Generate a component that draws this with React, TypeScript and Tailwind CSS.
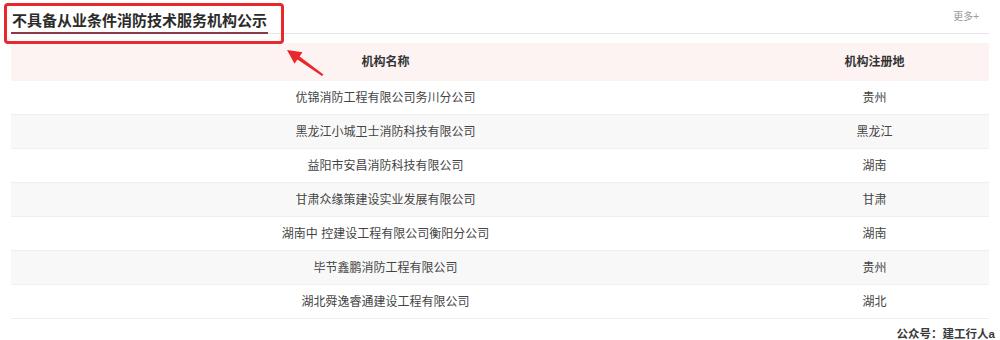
import React from 'react';

const rows = [
  { name: '优锦消防工程有限公司务川分公司', region: '贵州' },
  { name: '黑龙江小城卫士消防科技有限公司', region: '黑龙江' },
  { name: '益阳市安昌消防科技有限公司', region: '湖南' },
  { name: '甘肃众缘策建设实业发展有限公司', region: '甘肃' },
  { name: '湖南中 控建设工程有限公司衡阳分公司', region: '湖南' },
  { name: '毕节鑫鹏消防工程有限公司', region: '贵州' },
  { name: '湖北舜逸睿通建设工程有限公司', region: '湖北' },
];

const App = () => {
  return (
    <div
      className="relative w-[1000px] h-[340px] bg-white overflow-hidden"
      style={{ fontFamily: '"Liberation Sans", "Noto Sans CJK SC", sans-serif' }}
    >
      <div className="pl-[11px] pr-[11px] pt-[7px]">
        {/* title bar */}
        <div className="flex items-end justify-between border-b border-[#e6e6e6] h-[27px]">
          <div className="text-[15px] font-bold text-[#2b2b2b] leading-[22px] border-b-2 border-[#8a3a4c] mb-[-1px] pl-[1px] pr-[1px]">
            不具备从业条件消防技术服务机构公示
          </div>
          <div className="text-[10px] text-[#999] mb-[9px] mr-[10px]">更多+</div>
        </div>

        {/* table */}
        <div className="mt-[9px] w-[978px]">
          <div className="flex h-[38px] items-center bg-[#fdf3f3] text-[12px] font-bold text-[#333]">
            <div className="w-[749px] text-center">机构名称</div>
            <div className="flex-1 text-center">机构注册地</div>
          </div>
          {rows.map((row, i) => (
            <div
              key={i}
              className={
                'flex h-[34px] items-center text-[12px] text-[#444] border-b border-[#efefef] ' +
                (i % 2 === 1 ? 'bg-[#f8f8f8]' : 'bg-white')
              }
            >
              <div className="w-[749px] text-center">{row.name}</div>
              <div className="flex-1 text-center">{row.region}</div>
            </div>
          ))}
        </div>
      </div>

      {/* annotation box */}
      <div className="absolute left-[4px] top-[3px] w-[280px] h-[41px] border-[3px] border-[#e8282b] rounded-[4px]" />

      {/* annotation arrow */}
      <svg className="absolute left-[280px] top-[44px]" width="50" height="36" viewBox="0 0 50 36">
        <path d="M7 6 L22.5 8.3 L19.6 12.4 L43.5 30.5 L42 32 L17.4 15.6 L14.5 19.7 Z" fill="#e8282b" />
      </svg>

      {/* watermark */}
      <div className="absolute right-[5px] top-[326px] text-[11.5px] font-bold text-[#3a3a3a]">
        公众号：建工行人a
      </div>
    </div>
  );
};

export default App;
